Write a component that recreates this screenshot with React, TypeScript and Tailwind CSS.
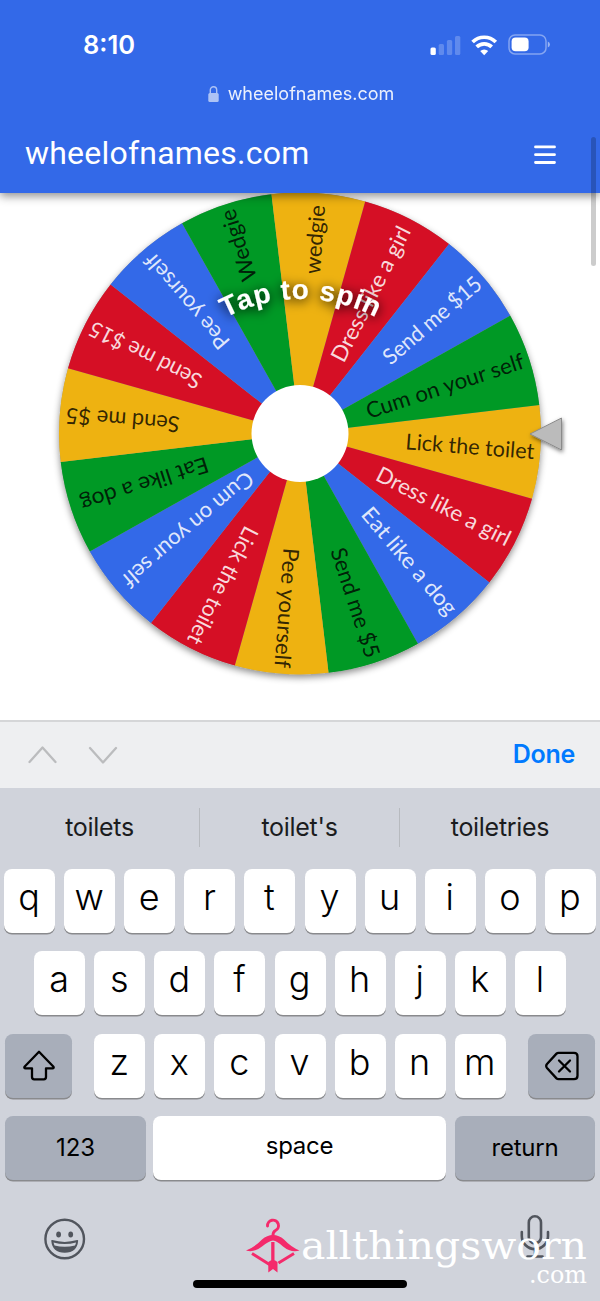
import React from 'react';

const CX = 300;
const CY = 240.5;
const RADIUS = 241;

const COLORS = {
  yellow: '#eeb211',
  red: '#d50f25',
  blue: '#3369e8',
  green: '#009925',
};

type Slice = { label: string; color: keyof typeof COLORS; length: number; end?: number };

// clockwise, starting at the pointer
const slices: Slice[] = [
  { label: 'Lick the toilet', color: 'yellow', length: 129 },
  { label: 'Dress like a girl', color: 'red', length: 148 },
  { label: 'Eat like a dog', color: 'blue', length: 134 },
  { label: 'Send me $5', color: 'green', length: 114 },
  { label: 'Pee yourself', color: 'yellow', length: 120 },
  { label: 'Lick the toilet', color: 'red', length: 129 },
  { label: 'Cum on your self', color: 'blue', length: 165, end: 230 },
  { label: 'Eat like a dog', color: 'green', length: 133, end: 230 },
  { label: 'Send me $5', color: 'yellow', length: 114 },
  { label: 'Send me $15', color: 'red', length: 123 },
  { label: 'Pee yourself', color: 'blue', length: 118, end: 233 },
  { label: 'Wedgie', color: 'green', length: 74 },
  { label: 'wedgie', color: 'yellow', length: 69, end: 229 },
  { label: 'Dress like a girl', color: 'red', length: 149, end: 231 },
  { label: 'Send me $15', color: 'blue', length: 122 },
  { label: 'Cum on your self', color: 'green', length: 165 },
];

const STEP = 360 / slices.length;
const START = 4.45;

const point = (deg: number) => {
  const rad = (deg * Math.PI) / 180;
  return `${CX + RADIUS * Math.cos(rad)} ${CY + RADIUS * Math.sin(rad)}`;
};

const Wheel: React.FC = () => (
  <svg width="600" height="528" viewBox="0 0 600 528" className="block">
    <defs>
      <filter id="wheelShadow" x="-10%" y="-10%" width="120%" height="120%">
        <feDropShadow dx="0" dy="3" stdDeviation="3.5" floodColor="#000" floodOpacity="0.45" />
      </filter>
      <filter id="pointerShadow" x="-30%" y="-30%" width="160%" height="160%">
        <feDropShadow dx="1" dy="2" stdDeviation="2" floodColor="#000" floodOpacity="0.5" />
      </filter>
      <filter id="textShadow" x="-20%" y="-50%" width="140%" height="200%">
        <feDropShadow dx="0" dy="2" stdDeviation="6" floodColor="#000" floodOpacity="1" />
      </filter>
      <path id="arc" d="M 140 267 A 161 161 0 0 1 462 267" />
    </defs>
    <circle cx={CX} cy={CY} r={RADIUS} fill="#999" filter="url(#wheelShadow)" />
    {slices.map((slice, i) => {
      const mid = START + i * STEP;
      return (
        <path
          key={i}
          d={`M ${CX} ${CY} L ${point(mid - STEP / 2)} A ${RADIUS} ${RADIUS} 0 0 1 ${point(mid + STEP / 2)} Z`}
          fill={COLORS[slice.color]}
        />
      );
    })}
    {slices.map((slice, i) => {
      const end = slice.end ?? 235;
      const light = slice.color === 'red' || slice.color === 'blue';
      return (
        <text
          key={i}
          x={CX + end - slice.length}
          y={CY + 7.5}
          textLength={slice.length}
          lengthAdjust="spacingAndGlyphs"
          transform={`rotate(${START + i * STEP} ${CX} ${CY})`}
          fontSize="22"
          fill={light ? '#fff' : '#000'}
          fillOpacity={light ? 0.85 : 0.8}
          className="font-['Lato',sans-serif]"
        >
          {slice.label}
        </text>
      );
    })}
    <circle cx={CX} cy={CY} r="48.5" fill="#fff" />
    <path
      d="M530 241 L561.500 225 V257 Z"
      fill="#bbb"
      stroke="#8b8b8b"
      strokeWidth="1"
      filter="url(#pointerShadow)"
    />
    <text
      fontSize="28"
      fontWeight="700"
      fill="#fff"
      textAnchor="middle"
      letterSpacing="0.9"
      filter="url(#textShadow)"
      className="font-['Liberation_Sans',sans-serif]"
    >
      <textPath href="#arc" startOffset="50%">
        Tap to spin
      </textPath>
    </text>
  </svg>
);

const StatusIcons: React.FC = () => (
  <svg width="122" height="24" viewBox="0 0 122 24" fill="#fff">
    <rect x="2.500" y="14.500" width="5.300" height="7.500" rx="1.500" />
    <g opacity="0.22">
      <rect x="10.700" y="11" width="5.300" height="11" rx="1.500" />
      <rect x="18.900" y="7" width="5.300" height="15" rx="1.500" />
      <rect x="27" y="3" width="5.300" height="19" rx="1.500" />
    </g>
    <g fill="none" stroke="#fff" strokeWidth="3.700">
      <path d="M44.600 9 A16.500 16.500 0 0 1 67.800 9" />
      <path d="M48.700 13.900 A10.700 10.700 0 0 1 63.700 13.900" />
    </g>
    <path d="M52.200 18 A6 6 0 0 1 60.200 18 L56.200 22.300 Z" />
    <rect x="81" y="1.900" width="37" height="19" rx="6" fill="none" stroke="#fff" strokeOpacity="0.4" strokeWidth="1.500" />
    <rect x="83.600" y="4.500" width="17" height="13.800" rx="4" />
    <path d="M119.800 8.500 q2.200 1 2.200 3 t-2.200 3 Z" opacity="0.5" />
  </svg>
);

const Header: React.FC = () => (
  <header className="relative z-10 h-[193px] bg-[#3369e8] text-white shadow-[0_3px_9px_rgba(0,0,0,0.45)]">
    <div className="flex h-[72px] items-center justify-between pt-[17px] pr-[50px] pl-[83px] font-['Inter',sans-serif]">
      <span className="text-[25.5px] leading-8 font-semibold">8:10</span>
      <StatusIcons />
    </div>
    <div className="flex h-[43px] items-center justify-center gap-[9px] pl-[2px] font-['Inter',sans-serif]">
      <svg width="11" height="16" viewBox="0 0 11 16" opacity="0.6">
        <rect x="0.300" y="7" width="10.400" height="9" rx="1.500" fill="#fff" />
        <path d="M2.300 7.500 V4 a3.200 3.200 0 0 1 6.400 0 V7.500" fill="none" stroke="#fff" strokeWidth="1.400" />
      </svg>
      <span className="text-[18px] leading-6 opacity-90">wheelofnames.com</span>
    </div>
    <div className="flex h-[76px] items-center justify-between pr-11 pl-[25px]">
      <span className="font-['Roboto',sans-serif] text-[32px] leading-10 tracking-[0.22px]">wheelofnames.com</span>
      <svg width="22" height="20" viewBox="0 0 22 20" stroke="#fff" strokeWidth="2.800" strokeLinecap="round" className="mt-1">
        <path d="M1.500 1.900 H20.500 M1.500 9.700 H20.500 M1.500 17.500 H20.500" />
      </svg>
    </div>
  </header>
);

const Key: React.FC<{ children: React.ReactNode }> = ({ children }) => (
  <div className="flex h-16 w-[51px] shrink-0 justify-center rounded-[8px] bg-white pt-1 pr-px text-[36px] leading-[48px] font-[350] shadow-[0_1.5px_0_#898a8d]">
    {children}
  </div>
);

const Letters: React.FC<{ letters: string }> = ({ letters }) => (
  <div className="flex gap-[9.1px]">
    {letters.split('').map((letter) => (
      <Key key={letter}>{letter}</Key>
    ))}
  </div>
);

const darkKey = 'flex h-16 shrink-0 items-center justify-center rounded-[8px] bg-[#a8aeba] shadow-[0_1.5px_0_#898a8d]';

const Keyboard: React.FC = () => (
  <div className="h-[513px] bg-[#d0d3db] font-['Inter',sans-serif] text-black">
    <div className="flex h-[81px] items-center pb-[2px] text-[25px] text-[#1b1c1e]">
      <span className="w-[199px] text-center tracking-[-0.3px]">toilets</span>
      <span className="h-[39px] w-px bg-[#b7babf]" />
      <span className="w-[199px] text-center tracking-[-0.3px]">toilet's</span>
      <span className="h-[39px] w-px bg-[#b7babf]" />
      <span className="w-[200px] text-center tracking-[-0.3px]">toiletries</span>
    </div>
    <div className="flex flex-col gap-[18.4px] px-[5px]">
      <div className="flex justify-center">
        <Letters letters="qwertyuiop" />
      </div>
      <div className="flex justify-center">
        <Letters letters="asdfghjkl" />
      </div>
      <div className="flex justify-between">
        <div className={`${darkKey} w-[67px]`}>
          <svg width="34" height="32" viewBox="0 0 34 32" fill="none" stroke="#000" strokeWidth="2.300" strokeLinejoin="round">
            <path d="M17 1.800 L31.500 16.700 Q32.200 18.300 30.500 18.300 H24 V27 Q24 29.300 21.800 29.300 H12.200 Q10 29.300 10 27 V18.300 H3.500 Q1.800 18.300 2.500 16.700 Z" />
          </svg>
        </div>
        <Letters letters="zxcvbnm" />
        <div className={`${darkKey} w-[67px]`}>
          <svg width="34" height="30" viewBox="0 0 34 30" fill="none" stroke="#000" strokeWidth="2.300" strokeLinecap="round" strokeLinejoin="round">
            <path d="M13.500 1.800 H29 Q32.500 1.800 32.500 5.300 V24.700 Q32.500 28.200 29 28.200 H13.500 Q12.300 28.200 11.500 27.400 L2 17 Q0.400 15 2 13 L11.500 2.600 Q12.300 1.800 13.500 1.800 Z" />
            <path d="M14 9.500 L25 20.500 M25 9.500 L14 20.500" />
          </svg>
        </div>
      </div>
      <div className="flex text-[24px]">
        <div className={`${darkKey} w-[141px]`}>123</div>
        <div className="mr-[9px] ml-[7px] flex h-16 w-[293px] items-center justify-center rounded-[8px] bg-white pb-1 tracking-[-0.3px] shadow-[0_1.5px_0_#898a8d]">
          space
        </div>
        <div className={`${darkKey} w-[140px] tracking-[-0.2px]`}>return</div>
      </div>
    </div>
    <div className="relative flex h-[120px] items-start justify-between pt-[34px] pr-[50px] pl-11">
      <svg width="42" height="42" viewBox="0 0 42 42" className="mt-1">
        <circle cx="20.700" cy="21" r="19.300" fill="none" stroke="#51555d" strokeWidth="2.400" />
        <ellipse cx="14.600" cy="16.500" rx="2.400" ry="2.900" fill="#51555d" />
        <ellipse cx="26.700" cy="16.500" rx="2.400" ry="2.900" fill="#51555d" />
        <path d="M8 22.800 Q20.700 26.500 33.400 22.800 Q32.500 34 20.700 34 Q9 34 8 22.800 Z" fill="#51555d" stroke="#51555d" strokeWidth="1.500" strokeLinejoin="round" />
        <path d="M9.500 24.500 Q20.700 27.500 32 24.500 Q31.800 26 31 27.500 Q20.700 30 10.500 27.500 Z" fill="#d0d3db" />
      </svg>
      <svg width="30" height="44" viewBox="0 0 30 44" fill="none" stroke="#51555d" strokeWidth="2.600" strokeLinecap="round">
        <rect x="8.800" y="2.300" width="12.200" height="27" rx="6.100" />
        <path d="M1.800 18 V22 A13 13 0 0 0 28 22 V18 M15 35 V42 M7.500 42.500 H22.500" />
      </svg>
      <svg width="350" height="72" viewBox="0 0 350 72" className="absolute top-[42px] left-[245px] overflow-visible">
        <g fill="#f42a6b">
          <path d="M1 28.500 Q10 25 17 17.500 Q22 13 28 13 Q34 13 39 17.500 Q46 25 54.500 28.500 Q46 31 38 24.500 Q32 19 28 18.500 Q24 19 17 24.500 Q9 31 1 28.500 Z" />
          <rect x="26.200" y="20" width="3.300" height="22" />
          <path d="M23.300 40 Q28 36 32.500 40 V50.500 L28 47 L23.300 50.500 Z" />
        </g>
        <g fill="none" stroke="#f42a6b" strokeWidth="2.900">
          <path d="M22.500 4 A5.500 5.500 0 1 1 30.500 8.500 Q27.900 9.800 27.900 14" strokeLinecap="round" />
          <path d="M7 31.500 L24.500 42.500 M49 31.500 L33.500 41" />
        </g>
        <g fill="#fff" className="font-['DejaVu_Serif',serif]">
          <text x="56" y="37" fontSize="40" textLength="286" lengthAdjust="spacingAndGlyphs">allthingsworn</text>
          <text x="284" y="61" fontSize="25" textLength="58" lengthAdjust="spacingAndGlyphs">.com</text>
        </g>
      </svg>
      <div className="absolute top-[100px] left-[193px] h-2 w-[214px] rounded-full bg-black" />
    </div>
  </div>
);

const App: React.FC = () => (
  <div className="relative h-[1301px] w-[600px] overflow-hidden bg-white">
    <Header />
    <main className="h-[527px]">
      <Wheel />
    </main>
    <div className="relative flex h-[68px] items-center justify-between border-t-2 border-[#d5d6d8] bg-[#eeeff1] pr-[25px] pl-7">
      <svg width="90" height="20" viewBox="0 0 90 20" fill="none" stroke="#bbbcbe" strokeWidth="2.300" strokeLinecap="round" strokeLinejoin="round">
        <path d="M1.500 17 L14.500 2.500 L27.500 17 M62 3 L75 17.500 L88 3" />
      </svg>
      <span className="font-['Inter',sans-serif] text-[25px] font-semibold tracking-[-0.3px] text-[#007aff]">Done</span>
    </div>
    <Keyboard />
    <div className="absolute top-[137px] right-[4.5px] z-20 h-[129px] w-[4.5px] rounded-full bg-black/20" />
  </div>
);

export default App;
